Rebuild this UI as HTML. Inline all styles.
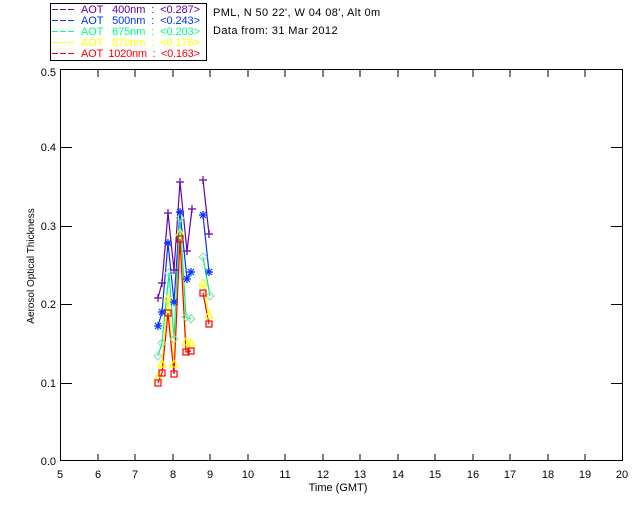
<html><head><style>body{margin:0;background:#fff;width:640px;height:512px;overflow:hidden}svg text{font-family:"Liberation Sans",sans-serif;font-size:11px}</style></head><body>
<svg width="640" height="512" xmlns="http://www.w3.org/2000/svg">
<rect x="50.5" y="3.5" width="156" height="57" fill="none" stroke="#000"/>
<g stroke-dasharray="6,2" stroke-width="1">
<line x1="52" y1="9.5" x2="74" y2="9.5" stroke="#6600aa"/>
<line x1="52" y1="20.5" x2="74" y2="20.5" stroke="#0033ff"/>
<line x1="52" y1="31.5" x2="74" y2="31.5" stroke="#00ff88"/>
<line x1="52" y1="42.5" x2="74" y2="42.5" stroke="#ffff00"/>
<line x1="52" y1="53.5" x2="74" y2="53.5" stroke="#ff0000"/>
</g>
<text x="81" y="13" fill="#6600aa" textLength="119" lengthAdjust="spacing" xml:space="preserve">AOT   400nm  :  &lt;0.287&gt;</text>
<text x="81" y="24" fill="#0033ff" textLength="119" lengthAdjust="spacing" xml:space="preserve">AOT   500nm  :  &lt;0.243&gt;</text>
<text x="81" y="35" fill="#00ff88" textLength="119" lengthAdjust="spacing" xml:space="preserve">AOT   675nm  :  &lt;0.203&gt;</text>
<text x="81" y="46" fill="#ffff00" textLength="119" lengthAdjust="spacing" xml:space="preserve">AOT   870nm  :  &lt;0.176&gt;</text>
<text x="81" y="57" fill="#ff0000" textLength="119" lengthAdjust="spacing" xml:space="preserve">AOT  1020nm  :  &lt;0.163&gt;</text>
<text x="213" y="16" fill="#000" letter-spacing="0.4">PML, N 50 22', W 04 08', Alt 0m</text>
<text x="213" y="34" fill="#000" letter-spacing="0.4">Data from: 31 Mar 2012</text>
<rect x="60.5" y="69.5" width="562" height="391" fill="none" stroke="#000" stroke-width="1"/>
<g stroke="#000" stroke-width="1">
<path d="M98 461v-7M135 461v-7M173 461v-7M210 461v-7M248 461v-7M285 461v-7M323 461v-7M360 461v-7M398 461v-7M435 461v-7M473 461v-7M510 461v-7M548 461v-7M585 461v-7"/>
<path d="M98 70v7M135 70v7M173 70v7M210 70v7M248 70v7M285 70v7M323 70v7M360 70v7M398 70v7M435 70v7M473 70v7M510 70v7M548 70v7M585 70v7"/>
<path d="M61 383.5h11M61 304.5h11M61 226.5h11M61 147.5h11M622 383.5h-11M622 304.5h-11M622 226.5h-11M622 147.5h-11"/>
</g>
<g fill="#000" text-anchor="middle">
<text x="60" y="478">5</text><text x="98" y="478">6</text><text x="135" y="478">7</text><text x="173" y="478">8</text><text x="210" y="478">9</text><text x="248" y="478">10</text><text x="285" y="478">11</text><text x="323" y="478">12</text><text x="360" y="478">13</text><text x="398" y="478">14</text><text x="435" y="478">15</text><text x="473" y="478">16</text><text x="510" y="478">17</text><text x="548" y="478">18</text><text x="585" y="478">19</text><text x="622" y="478">20</text>
<text x="338" y="491">Time (GMT)</text>
</g>
<g fill="#000" text-anchor="end">
<text x="56" y="465">0.0</text><text x="56" y="387">0.1</text><text x="56" y="308">0.2</text><text x="56" y="230">0.3</text><text x="56" y="151">0.4</text><text x="56" y="76">0.5</text>
</g>
<text transform="translate(34,266) rotate(-90)" text-anchor="middle" fill="#000" style="font-size:10px">Aerosol Optical Thickness</text>
<g fill="none" stroke-width="1.2">
<polyline stroke="#6600aa" points="158,298 162,283 168,213 174,270 180,182 187,251 192,209"/>
<polyline stroke="#6600aa" points="203,180 209,234"/>
<polyline stroke="#0033ff" points="158,326 162,312 168,243 174,302 180,212 187,279 191,272"/>
<polyline stroke="#0033ff" points="203,215 209,272"/>
<polyline stroke="#00ee88" points="158,356 162,343 169,273 174,339 180,218 186,317 191,319"/>
<polyline stroke="#00ee88" points="203,257 210,296"/>
<polyline stroke="#ffff00" points="158,377 162,364 168,298 174,364 180,233 186,342 191,343"/>
<polyline stroke="#ffff00" points="203,283 209,315"/>
<polyline stroke="#ff0000" points="158,383 162,373 168,313 174,374 180,239 186,352 191,351"/>
<polyline stroke="#ff0000" points="203,293 209,324"/>
</g>
<g fill="none" stroke-width="1">
<path d="M158 352l4 4-4 4-4-4zM162 339l4 4-4 4-4-4zM169 269l4 4-4 4-4-4zM174 335l4 4-4 4-4-4zM180 214l4 4-4 4-4-4zM186 313l4 4-4 4-4-4zM191 315l4 4-4 4-4-4zM203 253l4 4-4 4-4-4zM210 292l4 4-4 4-4-4z" stroke="#88ddaa"/>
</g>
<g fill="none" stroke="#ffff00" stroke-width="1.2">
<path d="M158 373l4 7h-8zM162 360l4 7h-8zM168 294l4 7h-8zM174 360l4 7h-8zM180 229l4 7h-8zM186 338l4 7h-8zM191 339l4 7h-8zM203 279l4 7h-8zM209 311l4 7h-8z"/>
</g>
<g fill="none" stroke="#ff0000" stroke-width="1.2">
<rect x="155" y="380" width="6" height="6"/><rect x="159" y="370" width="6" height="6"/><rect x="165" y="310" width="6" height="6"/><rect x="171" y="371" width="6" height="6"/><rect x="177" y="236" width="6" height="6"/><rect x="183" y="349" width="6" height="6"/><rect x="188" y="348" width="6" height="6"/><rect x="200" y="290" width="6" height="6"/><rect x="206" y="321" width="6" height="6"/>
</g>
<g stroke="#6600aa" stroke-width="1.2">
<path d="M154 298h8M158 294v8M158 283h8M162 279v8M164 213h8M168 209v8M170 270h8M174 266v8M176 182h8M180 178v8M183 251h8M187 247v8M188 209h8M192 205v8M199 180h8M203 176v8M205 234h8M209 230v8"/>
</g>
<g stroke="#0033ff" stroke-width="1.2">
<path d="M154 326h8M158 322v8M155 323l6 6M161 323l-6 6M158 312h8M162 308v8M159 309l6 6M165 309l-6 6M164 243h8M168 239v8M165 240l6 6M171 240l-6 6M170 302h8M174 298v8M171 299l6 6M177 299l-6 6M176 212h8M180 208v8M177 209l6 6M183 209l-6 6M183 279h8M187 275v8M184 276l6 6M190 276l-6 6M187 272h8M191 268v8M188 269l6 6M194 269l-6 6M199 215h8M203 211v8M200 212l6 6M206 212l-6 6M205 272h8M209 268v8M206 269l6 6M212 269l-6 6"/>
</g>
</body></html>
